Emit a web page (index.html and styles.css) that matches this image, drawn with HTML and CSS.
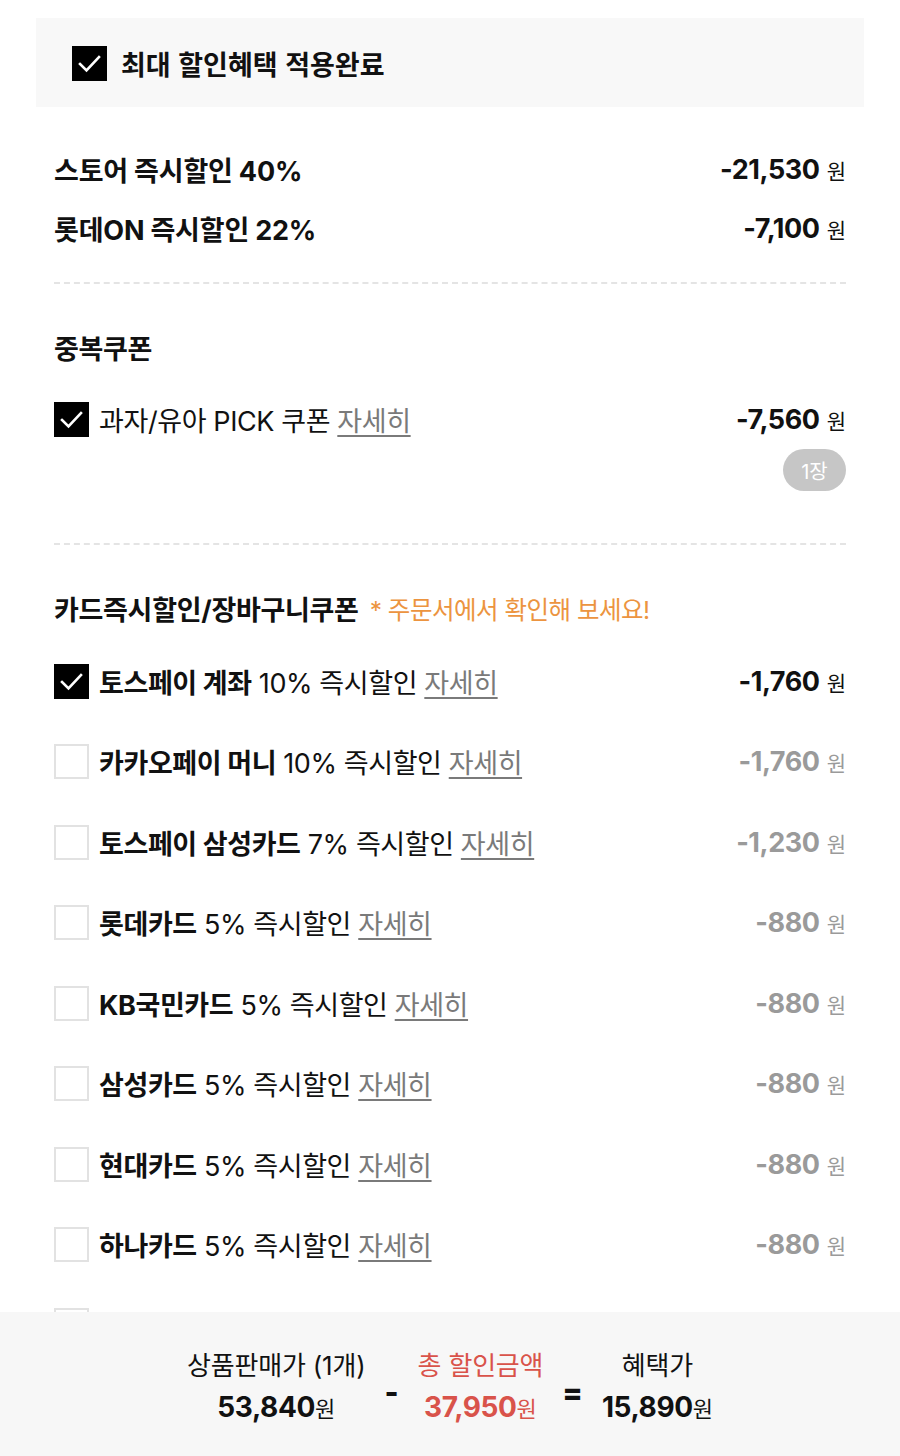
FILE: index.html
```html
<!DOCTYPE html>
<html lang="ko">
<head>
<meta charset="utf-8">
<title>할인혜택</title>
<link rel="stylesheet" href="styles.css">
</head>
<body>
<div class="page">
  <div class="banner">
    <span class="cb on"><svg viewBox="0 0 35 35"><path d="M8 18 L14.5 24.5 L27 11" /></svg></span>
    <span class="banner-text">최대 할인혜택 적용완료</span>
  </div>

  <div class="content">
    <div class="sec sec-first">
      <div class="row plain">
        <span class="label strong">스토어 즉시할인 40%</span>
        <span class="amt"><b>-21,530</b><span class="won">원</span></span>
      </div>
      <div class="row plain">
        <span class="label strong">롯데ON 즉시할인 22%</span>
        <span class="amt"><b>-7,100</b><span class="won">원</span></span>
      </div>
    </div>

    <div class="dash"></div>

    <div class="sec">
      <div class="sec-title">중복쿠폰</div>
      <div class="row coupon">
        <span class="item">
          <span class="cb on"><svg viewBox="0 0 35 35"><path d="M8 18 L14.5 24.5 L27 11" /></svg></span>
          <span class="txt">과자/유아 PICK 쿠폰 <span class="more">자세히</span></span>
        </span>
        <span class="amt"><b>-7,560</b><span class="won">원</span></span>
      </div>
      <div class="badge-row"><span class="badge">1장</span></div>
    </div>

    <div class="dash dash2"></div>

    <div class="sec">
      <div class="sec-title">카드즉시할인/장바구니쿠폰 <span class="note">* 주문서에서 확인해 보세요!</span></div>
      <div class="cards">
        <div class="row card">
          <span class="item">
            <span class="cb on"><svg viewBox="0 0 35 35"><path d="M8 18 L14.5 24.5 L27 11" /></svg></span>
            <span class="txt"><b>토스페이 계좌</b> 10% 즉시할인 <span class="more">자세히</span></span>
          </span>
          <span class="amt"><b>-1,760</b><span class="won">원</span></span>
        </div>
        <div class="row card off">
          <span class="item">
            <span class="cb"></span>
            <span class="txt"><b>카카오페이 머니</b> 10% 즉시할인 <span class="more">자세히</span></span>
          </span>
          <span class="amt"><b>-1,760</b><span class="won">원</span></span>
        </div>
        <div class="row card off">
          <span class="item">
            <span class="cb"></span>
            <span class="txt"><b>토스페이 삼성카드</b> 7% 즉시할인 <span class="more">자세히</span></span>
          </span>
          <span class="amt"><b>-1,230</b><span class="won">원</span></span>
        </div>
        <div class="row card off">
          <span class="item">
            <span class="cb"></span>
            <span class="txt"><b>롯데카드</b> 5% 즉시할인 <span class="more">자세히</span></span>
          </span>
          <span class="amt"><b>-880</b><span class="won">원</span></span>
        </div>
        <div class="row card off">
          <span class="item">
            <span class="cb"></span>
            <span class="txt"><b>KB국민카드</b> 5% 즉시할인 <span class="more">자세히</span></span>
          </span>
          <span class="amt"><b>-880</b><span class="won">원</span></span>
        </div>
        <div class="row card off">
          <span class="item">
            <span class="cb"></span>
            <span class="txt"><b>삼성카드</b> 5% 즉시할인 <span class="more">자세히</span></span>
          </span>
          <span class="amt"><b>-880</b><span class="won">원</span></span>
        </div>
        <div class="row card off">
          <span class="item">
            <span class="cb"></span>
            <span class="txt"><b>현대카드</b> 5% 즉시할인 <span class="more">자세히</span></span>
          </span>
          <span class="amt"><b>-880</b><span class="won">원</span></span>
        </div>
        <div class="row card off">
          <span class="item">
            <span class="cb"></span>
            <span class="txt"><b>하나카드</b> 5% 즉시할인 <span class="more">자세히</span></span>
          </span>
          <span class="amt"><b>-880</b><span class="won">원</span></span>
        </div>
        <div class="row card off">
          <span class="item">
            <span class="cb"></span>
            <span class="txt"><b>신한카드</b> 5% 즉시할인 <span class="more">자세히</span></span>
          </span>
          <span class="amt"><b>-880</b><span class="won">원</span></span>
        </div>
      </div>
    </div>
  </div>
</div>

<div class="footer">
  <div class="col">
    <div class="f-label">상품판매가 (1개)</div>
    <div class="f-val"><b>53,840</b><span class="w">원</span></div>
  </div>
  <div class="op minus">-</div>
  <div class="col red">
    <div class="f-label">총 할인금액</div>
    <div class="f-val"><b>37,950</b><span class="w">원</span></div>
  </div>
  <div class="op eq">=</div>
  <div class="col">
    <div class="f-label">혜택가</div>
    <div class="f-val"><b>15,890</b><span class="w">원</span></div>
  </div>
</div>
</body>
</html>
```

FILE: styles.css
```css
* { box-sizing: border-box; }
html, body { margin: 0; padding: 0; background: #fff; }
body {
  font-family: "Inter", "Noto Sans CJK KR", sans-serif;
  color: #111;
}
.page { padding: 18px 36px 200px; }

.banner {
  height: 89px;
  background: #f8f8f8;
  display: flex;
  align-items: center;
  padding-left: 36px;
  padding-top: 2px;
  gap: 14px;
}
.banner-text {
  font-family: "Noto Sans CJK KR", sans-serif;
  font-size: 27px;
  font-weight: 700;
  letter-spacing: 0;
}

.cb {
  width: 35px;
  height: 35px;
  flex: none;
  border: 2px solid #e2e2e2;
  background: #fff;
  display: inline-flex;
}
.cb.on { background: #000; border-color: #000; }
.cb svg { width: 100%; height: 100%; }
.cb svg path { fill: none; stroke: #fff; stroke-width: 2.6; stroke-linecap: square; stroke-linejoin: miter; }
.cb.on svg { width: 35px; height: 35px; margin: -2px; }

.content { padding: 0 18px; }

.row {
  display: flex;
  align-items: center;
  justify-content: space-between;
}
.sec-first { padding-top: 33px; }
.row.plain { height: 59px; }
.label { font-size: 27px; letter-spacing: -0.2px; }
.strong { font-weight: 700; }

.amt { display: flex; align-items: baseline; gap: 7px; }
.amt b { font-size: 27px; font-weight: 700; letter-spacing: -0.4px; }
.amt .won { font-size: 21px; font-weight: 400; font-family: "Noto Sans CJK KR", sans-serif; }

.dash {
  margin-top: 24px;
  height: 0;
  border-top: 2px dashed #e4e4e4;
}
.dash2 { margin-top: 52px; }

.sec-title {
  margin-top: 43px;
  height: 40px;
  display: flex;
  align-items: center;
  font-size: 27px;
  font-weight: 700;
  letter-spacing: -0.3px;
}
.note {
  color: #ec9440;
  font-weight: 400;
  font-size: 24.5px;
  margin-left: 11px;
  letter-spacing: -0.5px;
}

.row.coupon { margin-top: 35px; height: 35px; }
.item { display: flex; align-items: center; gap: 10px; }
.txt { font-size: 27px; letter-spacing: -0.4px; font-weight: 400; }
.txt b { font-weight: 700; }
.more {
  color: #7a7a7a;
  text-decoration: underline;
  text-underline-offset: 4px;
  text-decoration-thickness: 1.5px;
}

.badge-row { display: flex; justify-content: flex-end; margin-top: 12px; }
.badge {
  background: #c6c6c6;
  color: #fff;
  font-family: "Inter", "Noto Sans CJK KR", sans-serif;
  font-size: 20px;
  width: 63px;
  height: 42px;
  border-radius: 21px;
  display: flex;
  align-items: center;
  justify-content: center;
}

.cards { padding-top: 13px; }
.row.card { height: 80.5px; }
.row.card.off .amt { color: #9a9a9a; }

.footer {
  position: fixed;
  left: 0; right: 0; bottom: 0;
  height: 144px;
  background: #f7f7f7;
  display: flex;
  justify-content: center;
  align-items: center;
  gap: 19px;
  padding-top: 6px;
}
.col { display: flex; flex-direction: column; align-items: center; gap: 2px; }
.f-label { font-size: 26px; letter-spacing: -0.2px; line-height: 38px; }
.f-val { display: flex; align-items: baseline; line-height: 40px; }
.f-val b { font-size: 28px; font-weight: 700; letter-spacing: -0.4px; }
.f-val .w { font-size: 22px; font-family: "Noto Sans CJK KR", sans-serif; }
.red { color: #d9534a; }
.op { font-size: 30px; font-weight: 800; margin-top: 10px; }
```
